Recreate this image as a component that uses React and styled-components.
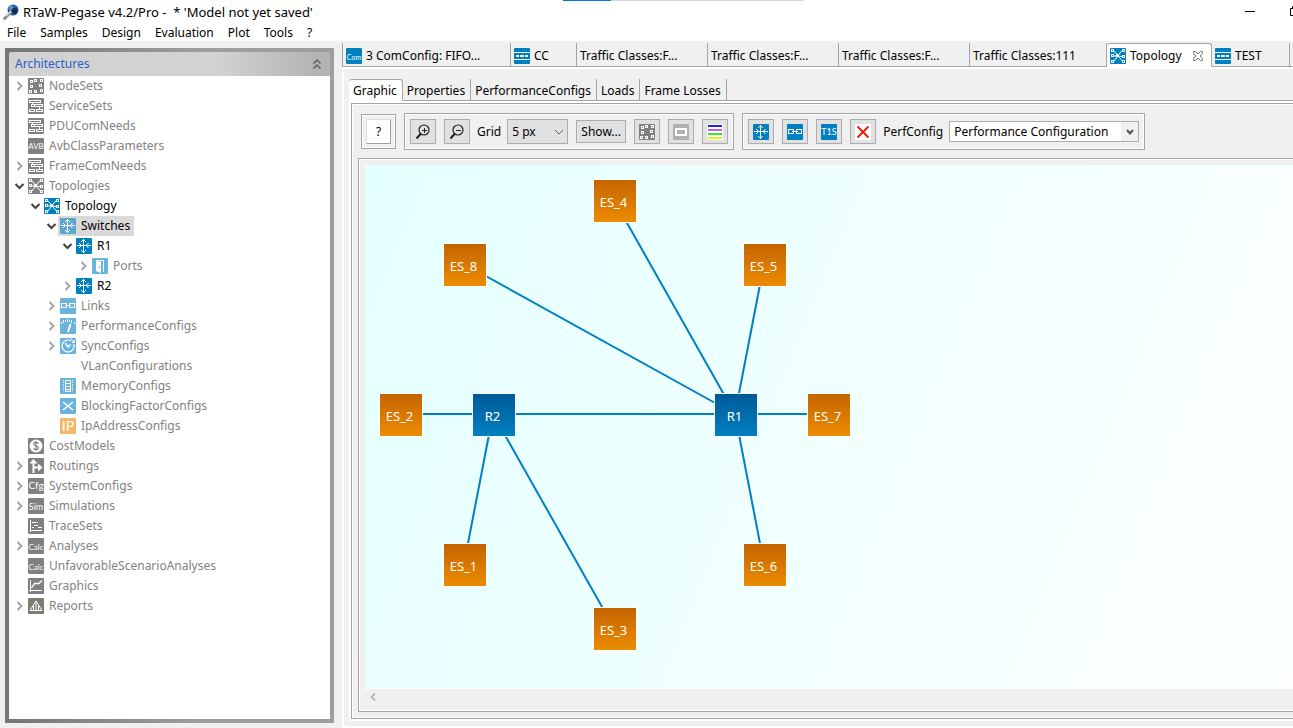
import React from "react";
import styled, { createGlobalStyle, css } from "styled-components";

const GREY = "#808080";
const BLUE = "#0080c0";
const PALE = "#6ab3dc";
const LINE = "#a3a3a8";
const FACE = "#f0f0f0";

const GlobalStyle = createGlobalStyle`
  *, *::before, *::after { box-sizing: border-box; }
  body { margin: 0; overflow: hidden; background: #fff; }
  body, button, select {
    font-family: "Noto Sans", "Open Sans", sans-serif;
    font-size: 12px;
    line-height: 16px;
    color: #000;
  }
  button { border: 0; padding: 0; background: none; text-align: left; white-space: pre; }
  svg { display: block; flex: none; }
`;

/* ---------- icons ---------- */

const Svg = ({ size = 16, children, ...rest }) => (
  <svg width={size} height={size} viewBox={`0 0 ${size} ${size}`} fill="none" aria-hidden="true" {...rest}>
    {children}
  </svg>
);

const Tile = ({ color, children }) => (
  <Svg>
    <rect width="16" height="16" rx="1" fill={color} />
    {children}
  </Svg>
);

const IconText = styled.text`
  font-family: Lato, "Liberation Sans", sans-serif;
  font-size: ${(p) => p.$size}px;
  fill: #fff;
`;

const WordIcon = ({ color, word, size = 8, y = 12 }) => (
  <Tile color={color}>
    <IconText x="8" y={y} textAnchor="middle" $size={size}>{word}</IconText>
  </Tile>
);

const px = { stroke: "#fff", shapeRendering: "crispEdges" };

const NodesIcon = ({ color }) => (
  <Tile color={color}>
    <path {...px} d="M2.5 2.5h2v2h-2zM6.5 1.5h2v2h-2zM12.5 1.5h2v2h-2zM2.5 7.5h2v2h-2zM11.5 6.5h2v2h-2zM1.5 12.5h2v2h-2zM6.5 12.5h2v2h-2zM12.5 11.5h2v2h-2z" />
  </Tile>
);
const ServicesIcon = ({ color }) => (
  <Tile color={color}>
    <path {...px} d="M1.5 2.5h11v2h-11zM3.5 6.5h3v2h-3zM6.5 6.5h8v2h-8zM1.5 11.5h5v2h-5zM8.5 11.5h6v2h-6zM4.5 5v1M11.5 9v2" />
  </Tile>
);
const TopologyIcon = ({ color }) => (
  <Tile color={color}>
    <path stroke="#fff" d="M4 3l4 4.500 4-5M3.500 8h4.500M8 8l4 0.500M4 13l4-5 4.500 5" />
    <path {...px} fill={color} d="M1.500 1.500h2v2h-2zM12.500 1.500h2v2h-2zM1.500 6.500h2v2h-2zM12.500 7.500h2v2h-2zM1.500 12.500h2v2h-2zM12.500 12.500h2v2h-2z" />
    <rect x="6" y="6" width="3" height="3" rx="1" fill="#fff" />
  </Tile>
);
const SwitchIcon = ({ color }) => (
  <Tile color={color}>
    <path {...px} d="M7.500 1v14M1 7.500h14" />
    <path stroke="#fff" d="M5 4l2.500-2.500L10 4M5 12l2.500 2.500L10 12M3 5l2.500 2.500L3 10M12.500 5L10 7.500l2.500 2.500" />
  </Tile>
);
const PortIcon = ({ color }) => (
  <Tile color={color}>
    <path {...px} d="M4.500 2.500h7v11" />
    <path d="M4 2l5 2v11l-5-2z" fill="#fff" />
    <path {...px} d="M7.500 8v2" stroke={color} />
  </Tile>
);
const LinkIcon = ({ color }) => (
  <Tile color={color}>
    <path {...px} d="M1.500 5.500h5v4h-5zM9.500 5.500h5v4h-5zM5 7.500h6" />
  </Tile>
);
const GaugeIcon = ({ color }) => (
  <Tile color={color}>
    <path {...px} d="M1.500 4v2M3.500 2v3M5.500 2v2M7.500 1v3M9.500 2v2M11.500 2v3M14.500 4v2" />
    <path d="M10.500 6L8 14" stroke="#fff" strokeWidth="2" />
  </Tile>
);
const ClockIcon = ({ color }) => (
  <Tile color={color}>
    <path d="M13.700 6A6 6 0 1 1 11 2.800" stroke="#fff" strokeWidth="1.200" />
    <path d="M5.500 5L8 9l2.500-2.500" stroke="#fff" strokeWidth="1.500" />
    <path d="M11 1l3.500 3.500M12 4.500h2.500V2" stroke="#fff" />
  </Tile>
);
const MemoryIcon = ({ color }) => (
  <Tile color={color}>
    <path {...px} d="M5.500 2.500h5v11h-5zM5 5.500h6M5 8.500h6M5 11.500h6" />
    <path {...px} strokeDasharray="1 1" d="M3.500 2v12M12.500 2v12" />
  </Tile>
);
const CrossIcon = ({ color }) => (
  <Tile color={color}>
    <path d="M3 4l10 8M13 4L3 12" stroke="#fff" strokeWidth="1.500" />
  </Tile>
);
const CostIcon = () => (
  <Tile color={GREY}>
    <circle cx="8" cy="8" r="6.500" fill="#fff" />
    <path d="M10.500 5.500C9.500 4 5.700 4 5.700 6c0 2.200 4.800 1.600 4.800 4 0 2-4 2-5 .3M8 3v10" stroke={GREY} strokeWidth="1.200" />
  </Tile>
);
const RoutingIcon = () => (
  <Tile color={GREY}>
    <path d="M5.500 15V3M5.500 9.500H12" stroke="#fff" strokeWidth="2" />
    <path d="M1.500 5.500l4-4.500 4 4.500zM10 5.500l4.500 4-4.500 4z" fill="#fff" />
  </Tile>
);
const TraceIcon = () => (
  <Tile color={GREY}>
    <path {...px} d="M2.500 2v12M2 12.500h12M4 4.500h4M6 7.500h4M10 9.500h4M4 9.500h2M9 4.500h1" />
  </Tile>
);
const GraphicsIcon = () => (
  <Tile color={GREY}>
    <path {...px} d="M2.500 2v12M1 12.500h13" />
    <path d="M3.500 10l3-4.500h4.500l3-3" stroke="#fff" strokeWidth="1.300" />
  </Tile>
);
const ReportIcon = () => (
  <Tile color="#7a7d72">
    <path d="M2 12.500L8 3l6 9.500zM5.500 12V7.500M8 3v9M10.500 12V7.500" stroke="#fff" />
  </Tile>
);
const BandsIcon = () => (
  <Tile color={BLUE}>
    <path {...px} d="M0 4.500h16M0 11.500h16" />
    <path {...px} strokeWidth="2" d="M2 8h3M6 8h4M11 8h3" />
  </Tile>
);
const FrameIcon = () => (
  <Tile color="#b0b0b0">
    <rect x="3" y="5" width="10" height="6" stroke="#fff" strokeWidth="2" />
  </Tile>
);
const StripesIcon = () => (
  <Svg shapeRendering="crispEdges">
    <rect width="16" height="16" fill="#fff" />
    <path d="M1 2h14" stroke="#2020f0" strokeWidth="2" />
    <path d="M1 6h14" stroke="#c060f0" strokeWidth="2" />
    <path d="M1 10h14" stroke="#30e830" strokeWidth="2" />
    <path d="M1 14h14" stroke="#f0e820" strokeWidth="2" />
  </Svg>
);
const DeleteIcon = () => (
  <Svg>
    <rect width="16" height="16" fill="#fff" />
    <path d="M2.500 2.500l11 11M13.500 2.500l-11 11" stroke="#e8200c" strokeWidth="2" />
  </Svg>
);
const ZoomIcon = ({ plus }) => (
  <Svg>
    <circle cx="9" cy="6" r="5" stroke="#222" strokeWidth="1.200" />
    <path d="M6 9.500l-4.500 5" stroke="#222" strokeWidth="2" />
    <path {...px} d={plus ? "M7 6.500h5M9.500 4v5" : "M7 6.500h5"} stroke="#222" />
  </Svg>
);
const LogoIcon = () => (
  <Svg>
    <circle cx="10" cy="6" r="5.500" fill="#2458a8" />
    <circle cx="8" cy="4" r="2.500" fill="#5a8fd0" />
    <circle cx="11.500" cy="7" r="3" fill="#1c2c48" />
    <path d="M0.500 15.500l8-8" stroke="#8a8f96" strokeWidth="3" />
    <path d="M3 12l5-5" stroke="#d8dce0" strokeWidth="1.500" />
  </Svg>
);
const Chevron = ({ open }) => (
  <Svg size={12}>
    {open
      ? <path d="M1.500 4L5.500 8l4-4" stroke="#404040" strokeWidth="2" />
      : <path d="M3.500 2l4 4-4 4" stroke="#a0a0a0" strokeWidth="1.800" />}
  </Svg>
);

/* ---------- window frame ---------- */

const Window = styled.div`
  height: 100vh;
  display: flex;
  flex-direction: column;
  overflow: hidden;
  position: relative;
`;
const TitleBar = styled.header`
  height: 23px;
  display: flex;
  align-items: center;
  gap: 4px;
  padding-left: 3px;
`;
const Title = styled.h1`
  flex: 1;
  margin: 0;
  font-size: 13px;
  font-weight: 400;
  white-space: pre;
`;
const WindowControls = styled.div`
  display: flex;
  gap: 34px;
  margin-right: -8px;
`;
const TopHandle = styled.div`
  position: absolute;
  top: 0;
  left: 563px;
  width: 241px;
  height: 1px;
  background: linear-gradient(90deg, #0078d7 48px, #d8d8d8 48px);
`;
const MenuBar = styled.nav`
  height: 18px;
  display: flex;
  align-items: center;
  gap: 14px;
  padding: 2px 0 0 7px;
`;
const Body = styled.main`
  flex: 1;
  min-height: 0;
  display: flex;
`;

/* ---------- architecture tree ---------- */

const Side = styled.aside`
  width: 342px;
  flex: none;
  display: flex;
  padding: 7px 8px 5px 5px;
  background: ${FACE};
`;
const TreePanel = styled.section`
  flex: 1;
  display: flex;
  flex-direction: column;
  padding: 4px;
  background: linear-gradient(90deg, #757575, #9e9e9e 60%);
`;
const TreeHeader = styled.div`
  height: 24px;
  display: flex;
  align-items: center;
  justify-content: space-between;
  padding: 0 7px 0 6px;
  border-radius: 2px 2px 0 0;
  color: #2a5fc8;
  background: linear-gradient(90deg, #d2d2d2 65%, #b4b4b4 95%);
`;
const Tree = styled.ul`
  flex: 1;
  margin: 0;
  padding: 0;
  list-style: none;
  background: #fff;
`;
const TreeRow = styled.li`
  height: 20px;
  display: flex;
  align-items: center;
  padding-left: ${(p) => 5 + p.$level * 16}px;
`;
const Expander = styled.button`
  width: 12px;
  height: 12px;
  visibility: ${(p) => (p.$shown ? "visible" : "hidden")};
`;
const TreeNode = styled.button`
  height: 20px;
  display: flex;
  align-items: center;
  gap: 5px;
  padding: 0 4px 0 2px;
  color: ${(p) => (p.$strong ? "#000" : "#828282")};
  background: ${(p) => (p.$selected ? "#d9d9d9" : "transparent")};
`;
const NoIcon = styled.span`
  width: 16px;
`;

const treeItems = [
  [0, "closed", <NodesIcon color={GREY} />, "NodeSets"],
  [0, "", <ServicesIcon color={GREY} />, "ServiceSets"],
  [0, "", <ServicesIcon color={GREY} />, "PDUComNeeds"],
  [0, "", <WordIcon color={GREY} word="AVB" y={11} />, "AvbClassParameters"],
  [0, "closed", <ServicesIcon color={GREY} />, "FrameComNeeds"],
  [0, "open", <TopologyIcon color={GREY} />, "Topologies"],
  [1, "open", <TopologyIcon color={BLUE} />, "Topology", "strong"],
  [2, "open", <SwitchIcon color="#5ca5ce" />, "Switches", "selected"],
  [3, "open", <SwitchIcon color={BLUE} />, "R1", "strong"],
  [4, "closed", <PortIcon color={PALE} />, "Ports"],
  [3, "closed", <SwitchIcon color={BLUE} />, "R2", "strong"],
  [2, "closed", <LinkIcon color={PALE} />, "Links"],
  [2, "closed", <GaugeIcon color={PALE} />, "PerformanceConfigs"],
  [2, "closed", <ClockIcon color={PALE} />, "SyncConfigs"],
  [2, "", <NoIcon />, "VLanConfigurations"],
  [2, "", <MemoryIcon color={PALE} />, "MemoryConfigs"],
  [2, "", <CrossIcon color={PALE} />, "BlockingFactorConfigs"],
  [2, "", <WordIcon color="#f4b766" word="IP" size={14} y={13} />, "IpAddressConfigs"],
  [0, "", <CostIcon />, "CostModels"],
  [0, "closed", <RoutingIcon />, "Routings"],
  [0, "closed", <WordIcon color={GREY} word="Cfg" size={10} y={11} />, "SystemConfigs"],
  [0, "closed", <WordIcon color={GREY} word="Sim" size={9} />, "Simulations"],
  [0, "", <TraceIcon />, "TraceSets"],
  [0, "closed", <WordIcon color={GREY} word="Calc" />, "Analyses"],
  [0, "", <WordIcon color={GREY} word="Calc" />, "UnfavorableScenarioAnalyses"],
  [0, "", <GraphicsIcon />, "Graphics"],
  [0, "closed", <ReportIcon />, "Reports"],
];

/* ---------- editor area ---------- */

const Editor = styled.section`
  flex: 1;
  min-width: 0;
  display: flex;
  flex-direction: column;
  background: ${FACE};
`;
const TabStrip = styled.div`
  height: 26px;
  display: flex;
  padding-top: 2px;
  overflow: hidden;
  &::before { content: ""; flex: none; width: 1px; background: ${LINE}; }
  &::after { content: ""; flex: 1; border-bottom: 1px solid ${LINE}; }
`;
const activeTab = css`
  background: #fff;
  border-top: 1px solid ${LINE};
  border-bottom-color: #fff;
  border-radius: 3px 3px 0 0;
`;
const EditorTab = styled.button`
  flex: none;
  width: ${(p) => p.$width}px;
  display: flex;
  align-items: center;
  gap: 4px;
  padding: ${(p) => (p.$active ? 1 : 2)}px 3px 0;
  border-right: 1px solid ${LINE};
  border-bottom: 1px solid ${LINE};
  ${(p) => p.$active && activeTab}
`;
const TabClose = styled.span`
  margin-left: 6px;
`;
const Page = styled.div`
  flex: 1;
  min-height: 0;
  display: flex;
  flex-direction: column;
  padding: 10px 0 5px 5px;
  border: solid #fff;
  border-width: 2px 0 2px 2px;
`;
const PageTabs = styled.div`
  height: 22px;
  flex: none;
  display: flex;
  &::after { content: ""; flex: 1; border-bottom: 1px solid ${LINE}; }
`;
const PageTab = styled.button`
  padding: ${(p) => (p.$active ? 1 : 2)}px 5px 0 4px;
  border-right: 1px solid ${LINE};
  border-bottom: 1px solid ${LINE};
  ${(p) => p.$active && activeTab}
`;
const PageFrame = styled.div`
  flex: 1;
  min-height: 0;
  display: flex;
  flex-direction: column;
  gap: 8px;
  margin: 2px -4px 2px 2px;
  padding: 9px 0 6px 6px;
  border: 1px solid ${LINE};
  box-shadow: 0 0 0 2px #fff, inset 0 0 0 1px #fff;
`;
const Toolbar = styled.div`
  display: flex;
  align-items: center;
  gap: 8px;
  padding-left: 3px;
`;
const ToolGroup = styled.div`
  display: flex;
  align-items: center;
  gap: 8px;
  padding: ${(p) => (p.$tight ? 4 : 5)}px;
  border: 1px solid ${LINE};
  box-shadow: inset 0 0 0 1px #fff;
`;
const ToolButton = styled.button`
  width: 26px;
  height: 25px;
  display: grid;
  place-items: center;
  border: 1px solid #adadad;
  background: #e1e1e1;
`;
const HelpButton = styled(ToolButton)`
  width: 25px;
  border-color: #e0e0e0 #a0a0a0 #a0a0a0 #e0e0e0;
  background: #fff;
`;
const TextButton = styled(ToolButton)`
  width: 50px;
  height: 23px;
`;
const ToolLabel = styled.label`
  margin: 0 -2px 0 -1px;
`;
const Picker = styled.span`
  display: grid;
  align-items: center;
  & > * { grid-area: 1 / 1; }
  & > svg { justify-self: end; margin-right: 3px; pointer-events: none; }
`;
const PickerSelect = styled.select`
  appearance: none;
  width: ${(p) => p.$width}px;
  height: ${(p) => (p.$flat ? 25 : 21)}px;
  padding: 0 4px;
  border: 1px solid #adadad;
  border-radius: 0;
  background: ${(p) => (p.$flat ? "#e1e1e1" : `linear-gradient(90deg, #fff calc(100% - 17px), ${FACE} calc(100% - 17px))`)};
`;
const CanvasFrame = styled.div`
  flex: 1;
  min-height: 0;
  display: flex;
  flex-direction: column;
  padding: 6px 0 1px 6px;
  border: 1px solid ${LINE};
  box-shadow: inset 0 0 0 1px #fff;
`;
const Canvas = styled.div`
  flex: 1;
  position: relative;
  overflow: hidden;
  border-bottom: 1px solid #fff;
  background: linear-gradient(112deg, #e4ffff, #fdffff);
`;
const Wires = styled.svg`
  position: absolute;
  inset: 0;
  width: 100%;
  height: 100%;
`;
const DiagramNode = styled.div`
  position: absolute;
  left: ${(p) => p.$x - 1}px;
  top: ${(p) => p.$y - 1}px;
  width: 44px;
  height: 44px;
  display: grid;
  place-items: center;
  padding: 2px 3px 0 0;
  border: 1px solid #fff;
  color: #fff;
  font-size: 13px;
  background: ${(p) => (p.$router ? "linear-gradient(#005a98, #0080c0)" : "linear-gradient(#c46400, #ec8c00)")};
`;
const ScrollBar = styled.div`
  height: 21px;
  display: flex;
  align-items: flex-start;
  padding: 2px 0 0 2px;
`;

const editorTabs = [
  { width: 168, icon: <WordIcon color={BLUE} word="Com" size={7} />, label: "3 ComConfig: FIFO..." },
  { width: 66, icon: <BandsIcon />, label: "CC" },
  { width: 131, label: "Traffic Classes:F..." },
  { width: 131, label: "Traffic Classes:F..." },
  { width: 131, label: "Traffic Classes:F..." },
  { width: 137, label: "Traffic Classes:111" },
  { width: 105, icon: <TopologyIcon color={BLUE} />, label: "Topology", active: true },
  { width: 78, icon: <BandsIcon />, label: "TEST" },
];

const nodes = {
  ES_4: [229, 15],
  ES_8: [79, 79],
  ES_5: [379, 79],
  ES_2: [15, 229],
  R2: [108, 229],
  R1: [350, 229],
  ES_7: [443, 229],
  ES_1: [79, 379],
  ES_6: [379, 379],
  ES_3: [229, 443],
};
const wires = [
  ["ES_4", "R1"], ["ES_8", "R1"], ["ES_5", "R1"], ["ES_7", "R1"], ["ES_6", "R1"],
  ["R2", "R1"], ["ES_2", "R2"], ["ES_1", "R2"], ["ES_3", "R2"],
];

export default function App() {
  return (
    <Window>
      <GlobalStyle />
      <TitleBar>
        <LogoIcon />
        <Title>{"RTaW-Pegase v4.2/Pro -  * 'Model not yet saved'"}</Title>
        <WindowControls>
          <button aria-label="Minimize"><Svg size={11}><path d="M0 5.500h10" stroke="#000" /></Svg></button>
          <button aria-label="Restore">
            <Svg size={11}><path d="M.5 2.500h7v7h-7zM2.500 2V.5h7v7H8" stroke="#000" /></Svg>
          </button>
        </WindowControls>
      </TitleBar>
      <TopHandle />
      <MenuBar>
        {["File", "Samples", "Design", "Evaluation", "Plot", "Tools", "?"].map((m) => (
          <button key={m}>{m}</button>
        ))}
      </MenuBar>
      <Body>
        <Side>
          <TreePanel>
            <TreeHeader>
              Architectures
              <button aria-label="Collapse">
                <Svg size={12}><path d="M2.500 5.500L6 2l3.500 3.500M2.500 10.500L6 7l3.500 3.500" stroke="#606060" strokeWidth="1.500" /></Svg>
              </button>
            </TreeHeader>
            <Tree>
              {treeItems.map(([level, state, icon, label, tone]) => (
                <TreeRow key={label} $level={level}>
                  <Expander $shown={!!state} aria-label={`Toggle ${label}`}>
                    <Chevron open={state === "open"} />
                  </Expander>
                  <TreeNode $strong={!!tone} $selected={tone === "selected"}>
                    {icon}
                    {label}
                  </TreeNode>
                </TreeRow>
              ))}
            </Tree>
          </TreePanel>
        </Side>
        <Editor>
          <TabStrip>
            {editorTabs.map((t, i) => (
              <EditorTab key={i} $width={t.width} $active={t.active}>
                {t.icon}
                {t.label}
                {t.active && (
                  <TabClose>
                    <Svg size={12}>
                      <path d="M1.500 1.500h2L6 4l2.500-2.500h2v2L8 6l2.500 2.500v2h-2L6 8l-2.500 2.500h-2v-2L4 6 1.500 3.500z" stroke="#777" />
                    </Svg>
                  </TabClose>
                )}
              </EditorTab>
            ))}
          </TabStrip>
          <Page>
            <PageTabs>
              {["Graphic", "Properties", "PerformanceConfigs", "Loads", "Frame Losses"].map((t, i) => (
                <PageTab key={t} $active={i === 0}>{t}</PageTab>
              ))}
            </PageTabs>
            <PageFrame>
              <Toolbar>
                <ToolGroup $tight>
                  <HelpButton>?</HelpButton>
                </ToolGroup>
                <ToolGroup>
                  <ToolButton aria-label="Zoom in"><ZoomIcon plus /></ToolButton>
                  <ToolButton aria-label="Zoom out"><ZoomIcon /></ToolButton>
                  <ToolLabel htmlFor="grid">Grid</ToolLabel>
                  <Picker>
                    <PickerSelect id="grid" $width={61} $flat><option>5 px</option></PickerSelect>
                    <Svg size={12}><path d="M2 4l4 4 4-4" stroke="#606060" /></Svg>
                  </Picker>
                  <TextButton>Show...</TextButton>
                  <ToolButton aria-label="Nodes"><NodesIcon color={GREY} /></ToolButton>
                  <ToolButton aria-label="Frame"><FrameIcon /></ToolButton>
                  <ToolButton aria-label="Colors"><StripesIcon /></ToolButton>
                </ToolGroup>
                <ToolGroup>
                  <ToolButton aria-label="Add switch"><SwitchIcon color={BLUE} /></ToolButton>
                  <ToolButton aria-label="Add link"><LinkIcon color={BLUE} /></ToolButton>
                  <ToolButton aria-label="Add T1S bus"><WordIcon color={BLUE} word="T1S" size={9} y={11} /></ToolButton>
                  <ToolButton aria-label="Delete"><DeleteIcon /></ToolButton>
                  <ToolLabel htmlFor="perf">PerfConfig</ToolLabel>
                  <Picker>
                    <PickerSelect id="perf" $width={190}><option>Performance Configuration</option></PickerSelect>
                    <Svg size={12}><path d="M3 4l3 3.500 3-3.500" stroke="#505050" strokeWidth="2" /></Svg>
                  </Picker>
                </ToolGroup>
              </Toolbar>
              <CanvasFrame>
                <Canvas>
                  <Wires>
                    {wires.map(([a, b]) => (
                      <line
                        key={a + b}
                        x1={nodes[a][0] + 20}
                        y1={nodes[a][1] + 20}
                        x2={nodes[b][0] + 20}
                        y2={nodes[b][1] + 20}
                        stroke={BLUE}
                        strokeWidth="2"
                      />
                    ))}
                  </Wires>
                  {Object.entries(nodes).map(([name, [x, y]]) => (
                    <DiagramNode key={name} $x={x} $y={y} $router={name.startsWith("R")}>{name}</DiagramNode>
                  ))}
                </Canvas>
                <ScrollBar>
                  <button aria-label="Scroll left">
                    <Svg size={12}><path d="M8 2.500L4.500 6 8 9.500" stroke="#b8b8b8" strokeWidth="1.800" /></Svg>
                  </button>
                </ScrollBar>
              </CanvasFrame>
            </PageFrame>
          </Page>
        </Editor>
      </Body>
    </Window>
  );
}
